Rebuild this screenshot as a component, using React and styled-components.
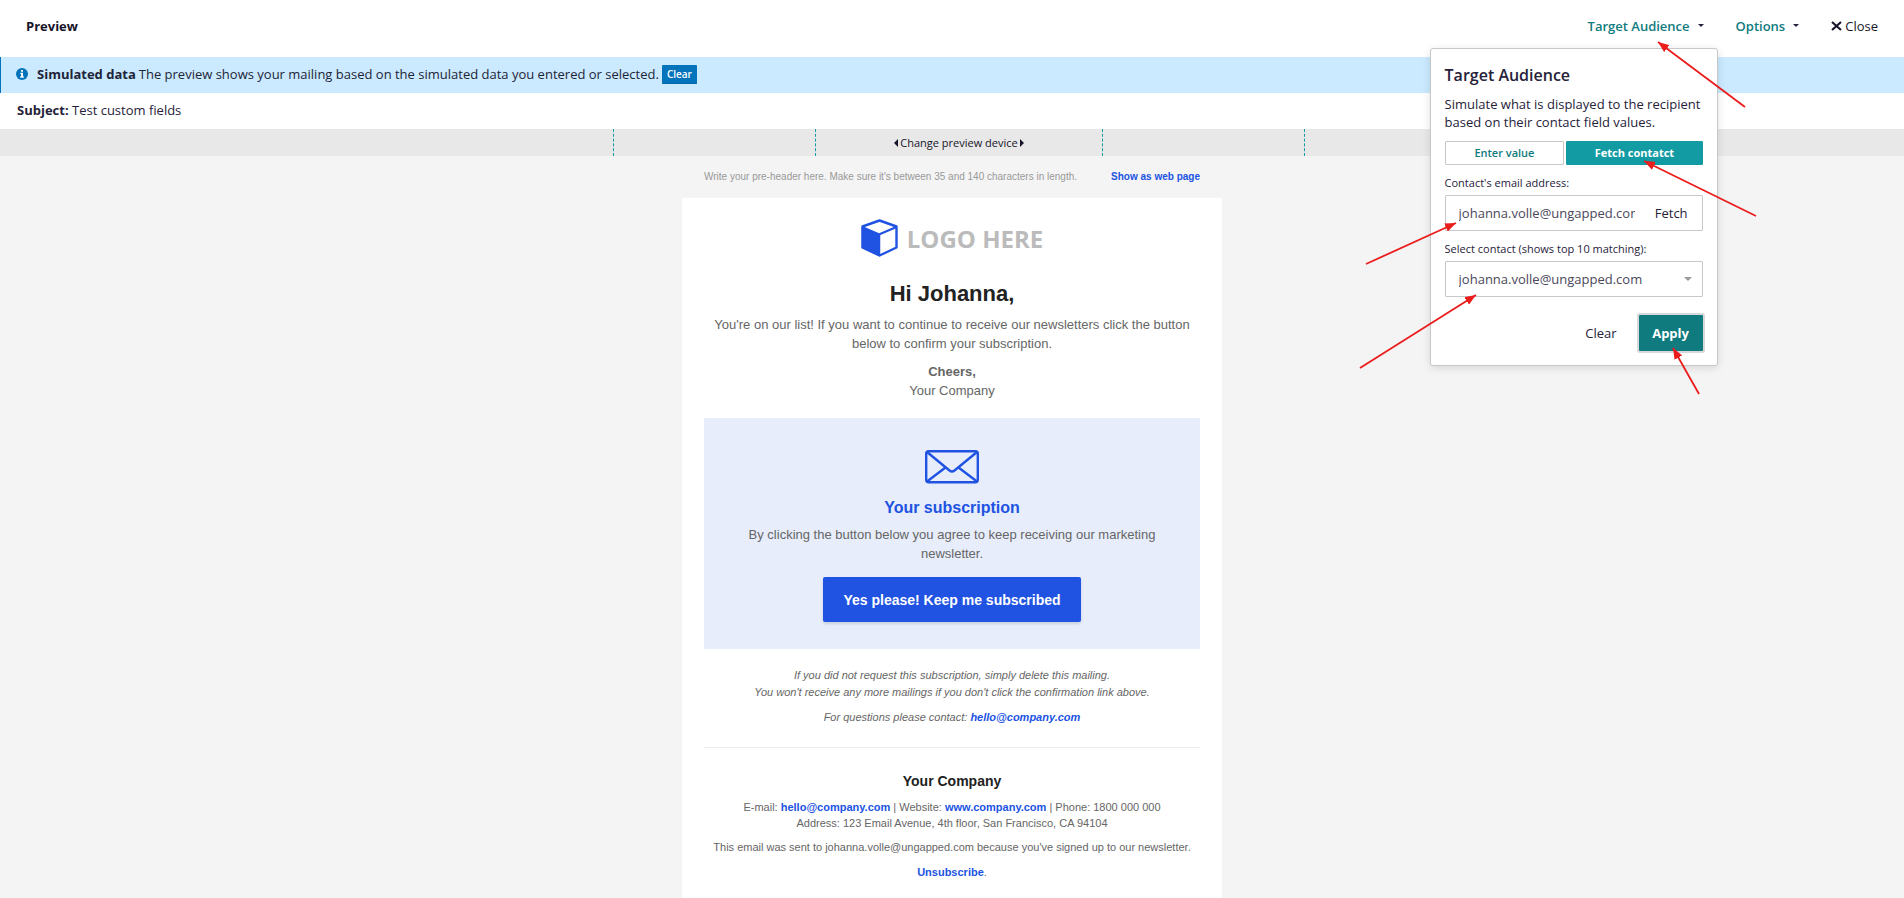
import React from 'react';
import styled, { createGlobalStyle } from 'styled-components';

const GlobalStyle = createGlobalStyle`
    * {
        box-sizing: border-box;
    }

    body {
        margin: 0;
        background-color: #f4f4f4;
        color: #26223a;
        font-family: "Open Sans", sans-serif;
        font-size: 13px;
    }

    button, input, select {
        font-family: inherit;
    }
`;

const Page = styled.div`
    display: flex;
    flex-direction: column;
    min-height: 100vh;
`;

const TopBar = styled.header`
    display: flex;
    justify-content: space-between;
    align-items: center;
    height: 57px;
    padding: 0 26px 6px;
    background-color: white;
`;

const PageTitle = styled.h1`
    margin: 0;
    font-size: 13px;
    font-weight: 700;
    color: #17142a;
`;

const Menu = styled.nav`
    display: flex;
    align-items: center;
    gap: 4px;
`;

const MenuItem = styled.div`
    position: relative;
`;

const MenuButton = styled.button`
    display: flex;
    align-items: center;
    gap: 8px;
    height: 32px;
    padding: 0 14px;
    border: none;
    background: none;
    color: #0f7b7e;
    font-size: 13px;
    font-weight: 600;
`;

const CloseButton = styled(MenuButton)`
    gap: 3px;
    padding-right: 0;
    color: #17142a;
    font-weight: 500;
`;

const Caret = styled.span`
    border: ${props => props.$size ?? 3}px solid transparent;
    border-top-color: ${props => props.$color ?? '#26223a'};
    border-bottom: none;
`;

const Banner = styled.div`
    display: flex;
    align-items: center;
    gap: 3px;
    height: 36px;
    padding: 0 15px 2px;
    border-left: 1px solid #0374bb;
    background-color: #cbeaff;
    color: #1d2438;

    svg {
        margin-right: 6px;
    }
`;

const BannerButton = styled.button`
    height: 19px;
    padding: 0 5px;
    border: none;
    border-bottom: 1px solid #0267a8;
    border-radius: 1px;
    background-color: #0374bb;
    color: white;
    font-size: 10px;
    font-weight: 600;
`;

const SubjectRow = styled.div`
    height: 36px;
    padding: 0 17px;
    background-color: white;
    line-height: 35px;
`;

const DeviceBar = styled.div`
    display: flex;
    justify-content: center;
    height: 27px;
    padding-left: 14px;
    background-color: #e8e8e8;
`;

const DeviceFrame = styled.div`
    display: flex;
    justify-content: center;
    width: ${props => props.$width}px;
    border: 1px dashed #139ba3;
    border-width: 0 1px;
`;

const DeviceButton = styled.button`
    display: flex;
    align-items: center;
    gap: 2px;
    padding: 0;
    border: none;
    background: none;
    color: #17142a;
    font-size: 11px;
`;

const SideArrow = styled.span`
    border: 4px solid transparent;
    border-width: 4px 0;
    border-${props => props.$side}: 4px solid #17142a;
`;

/* target audience popup */

const Popup = styled.form`
    position: absolute;
    top: 38px;
    right: 0;
    z-index: 1;
    width: 288px;
    padding: 14px;
    border: 1px solid #c8c8c8;
    border-radius: 3px;
    background-color: white;
    box-shadow: 0 2px 8px rgba(0, 0, 0, 0.12);
`;

const PopupTitle = styled.h2`
    margin: 0 0 8px;
    font-size: 16px;
    line-height: 24px;
    font-weight: 600;
`;

const PopupText = styled.p`
    margin: 0 0 10px;
    font-size: 13px;
    line-height: 18px;
    white-space: nowrap;
`;

const Tabs = styled.div`
    display: flex;
    gap: 2px;
    margin-bottom: 8px;
`;

const Tab = styled.button`
    flex: ${props => (props.$active ? '137' : '120')} 1 0;
    height: 24px;
    padding: 0;
    border: 1px solid ${props => (props.$active ? '#139ba3' : '#c8c8c8')};
    border-radius: 1px;
    background-color: ${props => (props.$active ? '#139ba3' : 'white')};
    color: ${props => (props.$active ? 'white' : '#0f7b7e')};
    font-size: 11px;
    font-weight: ${props => (props.$active ? 700 : 600)};
`;

const FieldLabel = styled.label`
    display: block;
    height: 22px;
    font-size: 11px;
    line-height: 20px;
    font-weight: 500;
`;

const Field = styled.div`
    display: flex;
    justify-content: space-between;
    align-items: center;
    height: 36px;
    margin-bottom: 8px;
    padding: 0 10px 0 13px;
    border: 1px solid #c8c8c8;
    border-radius: 1px;
`;

const TextInput = styled.input`
    width: 176px;
    padding: 0;
    border: none;
    outline: none;
    color: #4a475a;
    font-size: 13px;
`;

const Select = styled.select`
    appearance: none;
    flex: 1;
    padding: 0;
    border: none;
    background: none;
    color: #4a475a;
    font-size: 13px;
`;

const PlainButton = styled.button`
    padding: 0 4px;
    border: none;
    background: none;
    color: #26223a;
    font-size: 13px;
    font-weight: 500;
`;

const Actions = styled.div`
    display: flex;
    justify-content: flex-end;
    align-items: center;
    gap: 18px;
    margin-top: 18px;
`;

const ApplyButton = styled.button`
    width: 64px;
    height: 36px;
    border: none;
    border-radius: 1px;
    box-shadow: 0 0 0 2px #d9d9d9;
    background-color: #0f7b7e;
    color: white;
    font-size: 13px;
    font-weight: 700;
`;

const Arrows = styled.svg`
    position: absolute;
    top: 0;
    left: 0;
    overflow: visible;
    pointer-events: none;
`;

/* mailing */

const Mailing = styled.main`
    display: flex;
    flex: 1;
    flex-direction: column;
    width: 100%;
    max-width: 540px;
    margin: 0 auto;
    color: #666;
    font-family: "Liberation Sans", Arial, sans-serif;
    text-align: center;
`;

const PreHeader = styled.div`
    display: flex;
    justify-content: space-between;
    align-items: center;
    height: 42px;
    padding: 0 22px 2px;
    color: #999;
    font-size: 10px;
`;

const Link = styled.a`
    color: #2053e2;
    font-weight: 700;
    text-decoration: none;
`;

const Card = styled.div`
    flex: 1;
    padding: 21px 22px 8px;
    background-color: white;
`;

const Logo = styled.div`
    display: flex;
    justify-content: center;
    align-items: center;
    gap: 9px;
    height: 38px;
    color: #bbb;
    font-family: "Open Sans", sans-serif;
    font-size: 24px;
    font-weight: 700;
`;

const Greeting = styled.h2`
    margin: 23px 0 7px;
    color: #222;
    font-size: 22px;
    line-height: 28px;
`;

const Text = styled.p`
    margin: 0 0 9px;
    font-size: 13px;
    line-height: 19px;
`;

const Subscription = styled.section`
    margin-top: 18px;
    padding: 32px 30px 27px;
    background-color: #e7edfb;
`;

const SubscriptionTitle = styled.h3`
    margin: 11px 0 7px;
    color: #2053e2;
    font-size: 16px;
    line-height: 20px;
`;

const SubscribeButton = styled.button`
    height: 45px;
    margin-top: 5px;
    padding: 0 20px;
    border: none;
    border-radius: 2px;
    background-color: #2053e2;
    box-shadow: 0 2px 3px rgba(0, 0, 0, 0.12);
    color: white;
    font-size: 14px;
    font-weight: 700;
`;

const Notes = styled.div`
    padding: 18px 0 13px;
    border-bottom: 1px solid #ebebeb;
    font-style: italic;
`;

const Note = styled.p`
    margin: 0 0 8px;
    font-size: 11px;
    line-height: ${props => props.$lineHeight ?? 17}px;
    white-space: nowrap;
`;

const CompanyName = styled.h3`
    margin: 23px 0 8px;
    color: #222;
    font-size: 14px;
    line-height: 20px;
`;

const InfoIcon = () => (
    <svg width="12" height="12" viewBox="0 0 12 12" aria-hidden="true">
        <circle cx="6" cy="6" r="6" fill="#0374bb" />
        <path d="M5 2h2v1.7H5zM4.3 4.7H7v3.6h.8v1.4H4.3V8.3h.8V6.1h-.8z" fill="#fff" />
    </svg>
);

const CloseIcon = () => (
    <svg width="11" height="10" viewBox="0 0 11 10" aria-hidden="true">
        <path d="M1 1l9 8M10 1l-9 8" stroke="#17142a" strokeWidth="2.1" />
    </svg>
);

const CubeIcon = () => (
    <svg width="37" height="38" viewBox="0 0 37 38" aria-hidden="true">
        <path d="M18.5 1.5L35.5 7.5V28.5L18.5 36.5L1.5 28.5V7.5Z" fill="#fff" stroke="#2053e2" strokeWidth="2.4" strokeLinejoin="round" />
        <path d="M1.5 8L18.5 15.3V36.5L1.5 28.5Z" fill="#2053e2" stroke="#2053e2" strokeWidth="1.5" strokeLinejoin="round" />
        <path d="M18.5 15.3L35.5 8" stroke="#2053e2" strokeWidth="2.2" />
    </svg>
);

const EnvelopeIcon = () => (
    <svg width="54" height="34" viewBox="0 0 54 34" fill="none" stroke="#2053e2" strokeWidth="2.4" aria-hidden="true">
        <rect x="1.2" y="1.2" width="51.6" height="31" rx="2.5" />
        <path d="M2 2L24.5 20.5Q27 22.5 29.5 20.5L52 2M2 31.5L20.5 17.5M52 31.5L33.5 17.5" />
    </svg>
);

const arrows = [
    { from: [314, 58], to: [227, -7] },
    { from: [325, 167], to: [213, 112] },
    { from: [-65, 215], to: [25, 174] },
    { from: [-71, 319], to: [45, 246] },
    { from: [268, 345], to: [242, 299] },
];

const ArrowLayer = () => (
    <Arrows width="1" height="1" aria-hidden="true">
        <defs>
            <marker id="head" viewBox="0 0 10 8" markerWidth="11" markerHeight="9" refX="10" refY="4" orient="auto" markerUnits="userSpaceOnUse">
                <path d="M0 0L10 4L0 8Z" fill="#ea1c1c" />
            </marker>
        </defs>
        {arrows.map(({ from, to }) => (
            <line key={from.join()} x1={from[0]} y1={from[1]} x2={to[0]} y2={to[1]} stroke="#ea1c1c" strokeWidth="1.8" markerEnd="url(#head)" />
        ))}
    </Arrows>
);

const TargetAudience = () => (
    <Popup onSubmit={e => e.preventDefault()}>
        <PopupTitle>Target Audience</PopupTitle>
        <PopupText>
            Simulate what is displayed to the recipient<br />
            based on their contact field values.
        </PopupText>
        <Tabs>
            <Tab type="button">Enter value</Tab>
            <Tab type="button" $active>Fetch contatct</Tab>
        </Tabs>
        <FieldLabel htmlFor="email">Contact's email address:</FieldLabel>
        <Field>
            <TextInput id="email" defaultValue="johanna.volle@ungapped.com" />
            <PlainButton type="button">Fetch</PlainButton>
        </Field>
        <FieldLabel htmlFor="contact">Select contact (shows top 10 matching):</FieldLabel>
        <Field>
            <Select id="contact">
                <option>johanna.volle@ungapped.com</option>
            </Select>
            <Caret $color="#999" $size={4} />
        </Field>
        <Actions>
            <PlainButton type="reset">Clear</PlainButton>
            <ApplyButton type="submit">Apply</ApplyButton>
        </Actions>
        <ArrowLayer />
    </Popup>
);

const MailingPreview = () => (
    <Mailing>
        <PreHeader>
            <span>Write your pre-header here. Make sure it's between 35 and 140 characters in length.</span>
            <Link href="#web">Show as web page</Link>
        </PreHeader>
        <Card>
            <Logo>
                <CubeIcon />
                LOGO HERE
            </Logo>
            <Greeting>Hi Johanna,</Greeting>
            <Text>
                You're on our list! If you want to continue to receive our newsletters click the button
                below to confirm your subscription.
            </Text>
            <Text>
                <strong>Cheers,</strong><br />
                Your Company
            </Text>
            <Subscription>
                <EnvelopeIcon />
                <SubscriptionTitle>Your subscription</SubscriptionTitle>
                <Text>By clicking the button below you agree to keep receiving our marketing newsletter.</Text>
                <SubscribeButton>Yes please! Keep me subscribed</SubscribeButton>
            </Subscription>
            <Notes>
                <Note>
                    If you did not request this subscription, simply delete this mailing.<br />
                    You won't receive any more mailings if you don't click the confirmation link above.
                </Note>
                <Note>
                    For questions please contact: <Link href="mailto:hello@company.com">hello@company.com</Link>
                </Note>
            </Notes>
            <CompanyName>Your Company</CompanyName>
            <Note $lineHeight={16}>
                E-mail: <Link href="mailto:hello@company.com">hello@company.com</Link> | Website:{' '}
                <Link href="#company">www.company.com</Link> | Phone: 1800 000 000<br />
                Address: 123 Email Avenue, 4th floor, San Francisco, CA 94104
            </Note>
            <Note>This email was sent to johanna.volle@ungapped.com because you've signed up to our newsletter.</Note>
            <Note><Link href="#unsubscribe">Unsubscribe</Link>.</Note>
        </Card>
    </Mailing>
);

export default function App() {
    return (
        <Page>
            <GlobalStyle />
            <TopBar>
                <PageTitle>Preview</PageTitle>
                <Menu>
                    <MenuItem>
                        <MenuButton>Target Audience <Caret /></MenuButton>
                        <TargetAudience />
                    </MenuItem>
                    <MenuButton>Options <Caret /></MenuButton>
                    <CloseButton><CloseIcon /> Close</CloseButton>
                </Menu>
            </TopBar>
            <Banner>
                <InfoIcon />
                <strong>Simulated data</strong>
                <span>The preview shows your mailing based on the simulated data you entered or selected.</span>
                <BannerButton>Clear</BannerButton>
            </Banner>
            <SubjectRow><strong>Subject:</strong> Test custom fields</SubjectRow>
            <DeviceBar>
                <DeviceFrame $width={692}>
                    <DeviceFrame $width={288}>
                        <DeviceButton>
                            <SideArrow $side="right" />
                            Change preview device
                            <SideArrow $side="left" />
                        </DeviceButton>
                    </DeviceFrame>
                </DeviceFrame>
            </DeviceBar>
            <MailingPreview />
        </Page>
    );
}
